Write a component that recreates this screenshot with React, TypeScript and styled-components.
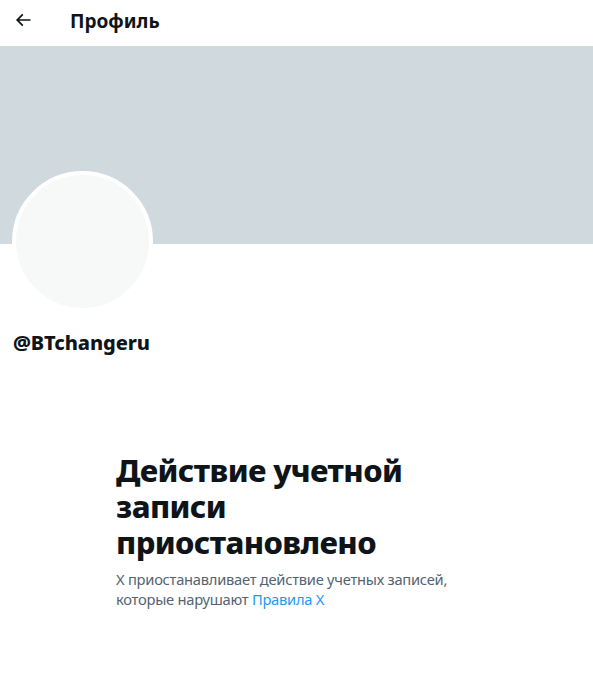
import React from 'react';
import styled, { createGlobalStyle } from 'styled-components';

const GlobalStyle = createGlobalStyle`
  html, body {
    margin: 0;
    padding: 0;
    background: #ffffff;
  }
  body {
    font-family: "Noto Sans", "Open Sans", sans-serif;
    color: #0f1419;
  }
`;

const Page = styled.div`
  width: 593px;
  display: flex;
  flex-direction: column;
`;

const Header = styled.div`
  height: 46px;
  display: flex;
  align-items: center;
  padding: 0 13px;
  box-sizing: border-box;
`;

const BackButton = styled.div`
  width: 20px;
  height: 20px;
  margin-right: 37px;
  margin-top: -6px;
  display: flex;
  svg {
    width: 20px;
    height: 20px;
    fill: #0f1419;
  }
`;

const Title = styled.h2`
  margin: 0;
  margin-top: -5px;
  font-size: 19px;
  font-weight: 700;
  color: #0f1419;
`;

const Banner = styled.div`
  height: 198px;
  background: #cfd9de;
`;

const ProfileArea = styled.div`
  padding: 0 13px;
`;

const Avatar = styled.div`
  width: 133px;
  height: 133px;
  margin-top: -73px;
  margin-left: -1px;
  border-radius: 50%;
  border: 4px solid #ffffff;
  background: #f7f9f9;
`;

const Handle = styled.div`
  margin-top: 19px;
  font-size: 20px;
  font-weight: 800;
  line-height: 24px;
  letter-spacing: -0.1px;
  color: #0f1419;
`;

const EmptyState = styled.div`
  width: 380px;
  margin: 97px 0 0 116px;
  display: flex;
  flex-direction: column;
`;

const Headline = styled.h1`
  width: 340px;
  margin: 0;
  font-size: 31px;
  font-weight: 800;
  line-height: 36px;
  letter-spacing: -0.6px;
  color: #0f1419;
`;

const Subtitle = styled.p`
  margin: 9px 0 0;
  font-size: 14.7px;
  line-height: 20px;
  letter-spacing: -0.25px;
  color: #536471;
`;

const RulesLink = styled.a`
  color: #1d9bf0;
  text-decoration: none;
`;

export default function App() {
  return (
    <Page>
      <GlobalStyle />
      <Header>
        <BackButton>
          <svg viewBox="0 0 24 24">
            <path d="M7.414 13l5.043 5.04-1.414 1.42L3.586 12l7.457-7.46 1.414 1.42L7.414 11H21v2H7.414z" />
          </svg>
        </BackButton>
        <Title>Профиль</Title>
      </Header>
      <Banner />
      <ProfileArea>
        <Avatar />
        <Handle>@BTchangeru</Handle>
      </ProfileArea>
      <EmptyState>
        <Headline>Действие учетной записи приостановлено</Headline>
        <Subtitle>
          X приостанавливает действие учетных записей,
          <br />
          которые нарушают <RulesLink href="#">Правила X</RulesLink>
        </Subtitle>
      </EmptyState>
    </Page>
  );
}
